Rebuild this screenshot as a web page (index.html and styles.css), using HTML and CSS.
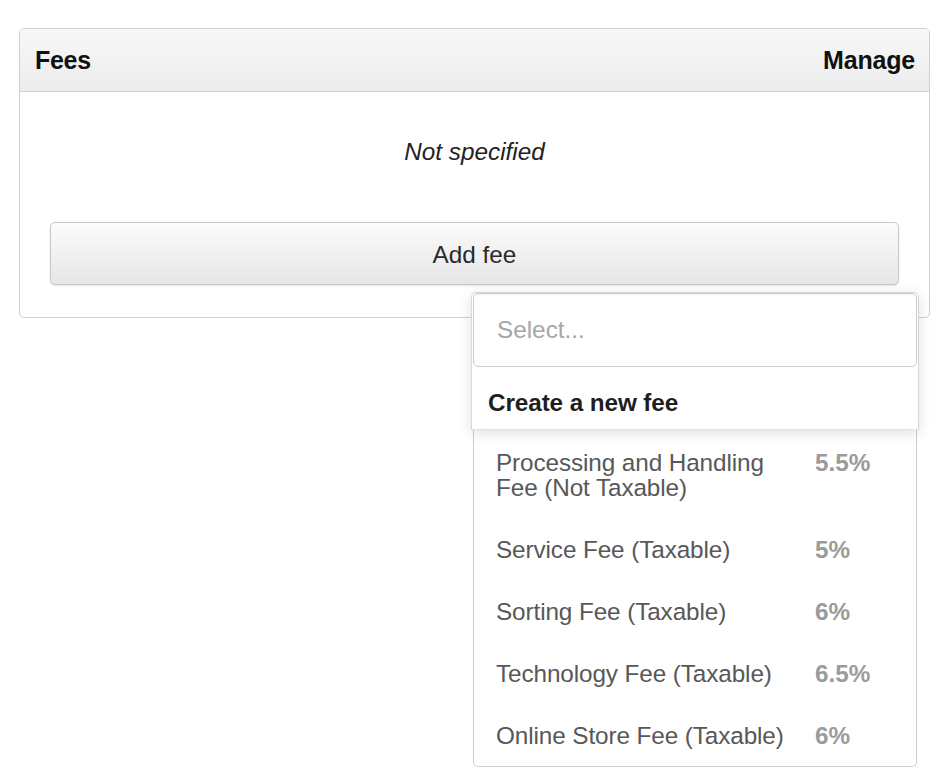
FILE: index.html
```html
<!DOCTYPE html>
<html>
<head>
<meta charset="utf-8">
<link rel="stylesheet" href="styles.css">
</head>
<body>
<div class="stage">
  <section class="panel">
    <header class="panel-head">
      <h2 class="panel-title">Fees</h2>
      <a class="panel-action">Manage</a>
    </header>
    <div class="panel-body">
      <p class="empty">Not specified</p>
      <button class="add-btn">Add fee</button>
    </div>
  </section>

  <div class="dropdown">
    <div class="dd-top">
      <div class="dd-input">Select...</div>
      <div class="dd-create">Create a new fee</div>
    </div>
    <ul class="dd-list">
      <li class="dd-item"><span class="dd-name">Processing and Handling Fee (Not Taxable)</span><span class="dd-pct">5.5%</span></li>
      <li class="dd-item"><span class="dd-name">Service Fee (Taxable)</span><span class="dd-pct">5%</span></li>
      <li class="dd-item"><span class="dd-name">Sorting Fee (Taxable)</span><span class="dd-pct">6%</span></li>
      <li class="dd-item"><span class="dd-name">Technology Fee (Taxable)</span><span class="dd-pct">6.5%</span></li>
      <li class="dd-item"><span class="dd-name">Online Store Fee (Taxable)</span><span class="dd-pct">6%</span></li>
    </ul>
  </div>
</div>
</body>
</html>
```

FILE: styles.css
```css
* { box-sizing: border-box; }

html, body {
  margin: 0;
  padding: 0;
  background: #ffffff;
}

body {
  font-family: "Liberation Sans", Arial, Helvetica, sans-serif;
  font-size: 24.3px;
  color: #222;
}

.stage {
  position: relative;
  width: 936px;
  height: 770px;
  padding: 28px 6px 0 19px;
}

.panel {
  border: 1px solid #cfcfcf;
  border-radius: 5px;
  background: #fff;
  overflow: hidden;
}

.panel-head {
  height: 63px;
  display: flex;
  align-items: center;
  justify-content: space-between;
  padding: 1px 14px 0 15px;
  background: linear-gradient(#f8f8f8, #ececec);
  border-bottom: 1px solid #d0d0d0;
}

.panel-title {
  margin: 0;
  font-size: 25px;
  font-weight: bold;
  color: #111;
  letter-spacing: -0.3px;
}

.panel-action {
  font-size: 25px;
  font-weight: bold;
  color: #111;
  letter-spacing: -0.2px;
}

.panel-body {
  padding: 0 30px 32px;
}

.empty {
  margin: 0;
  padding: 45px 0 0;
  height: 130px;
  line-height: 30px;
  text-align: center;
  font-style: italic;
  color: #222;
}

.add-btn {
  display: block;
  width: 100%;
  height: 63px;
  font: inherit;
  color: #2a2a2a;
  background: linear-gradient(#fbfbfb, #e6e6e6);
  border: 1px solid #c8c8c8;
  border-radius: 5px;
  box-shadow: 0 1px 2px rgba(0,0,0,0.12);
  padding: 2px 0 0;
}

.dropdown {
  position: absolute;
  left: 471px;
  top: 292px;
  width: 448px;
}

.dd-top {
  background: #fff;
  border: 1px solid #d8d8d8;
  border-bottom: none;
  border-radius: 5px 5px 0 0;
  box-shadow: 0 3px 14px rgba(0,0,0,0.13);
  position: relative;
  z-index: 2;
}

.dd-input {
  height: 74px;
  margin: 0 1px;
  border: 1.5px solid #cdcdcd;
  border-radius: 5px;
  padding: 0 0 0 23px;
  display: flex;
  align-items: center;
  color: #a6a6a6;
  box-shadow: inset 0 1px 2px rgba(0,0,0,0.06);
}

.dd-create {
  height: 63px;
  display: flex;
  align-items: center;
  padding: 10px 0 0 16px;
  font-weight: bold;
  color: #1e1e1e;
  letter-spacing: -0.1px;
  border-bottom: 1px solid #e2e2e2;
}

.dd-list {
  list-style: none;
  margin: 0 2px;
  padding: 1px 0 0;
  background: #fff;
  border: 1.5px solid #cdcdcd;
  border-top: none;
  border-radius: 0 0 5px 5px;
  position: relative;
  z-index: 1;
}

.dd-item {
  display: grid;
  grid-template-columns: 1fr 80px;
  column-gap: 18px;
  padding: 19px 21px 18px 22px;
  line-height: 25px;
  color: #585858;
  letter-spacing: -0.1px;
}

.dd-pct {
  font-weight: bold;
  color: #9b9b9b;
  letter-spacing: 0;
}
```
